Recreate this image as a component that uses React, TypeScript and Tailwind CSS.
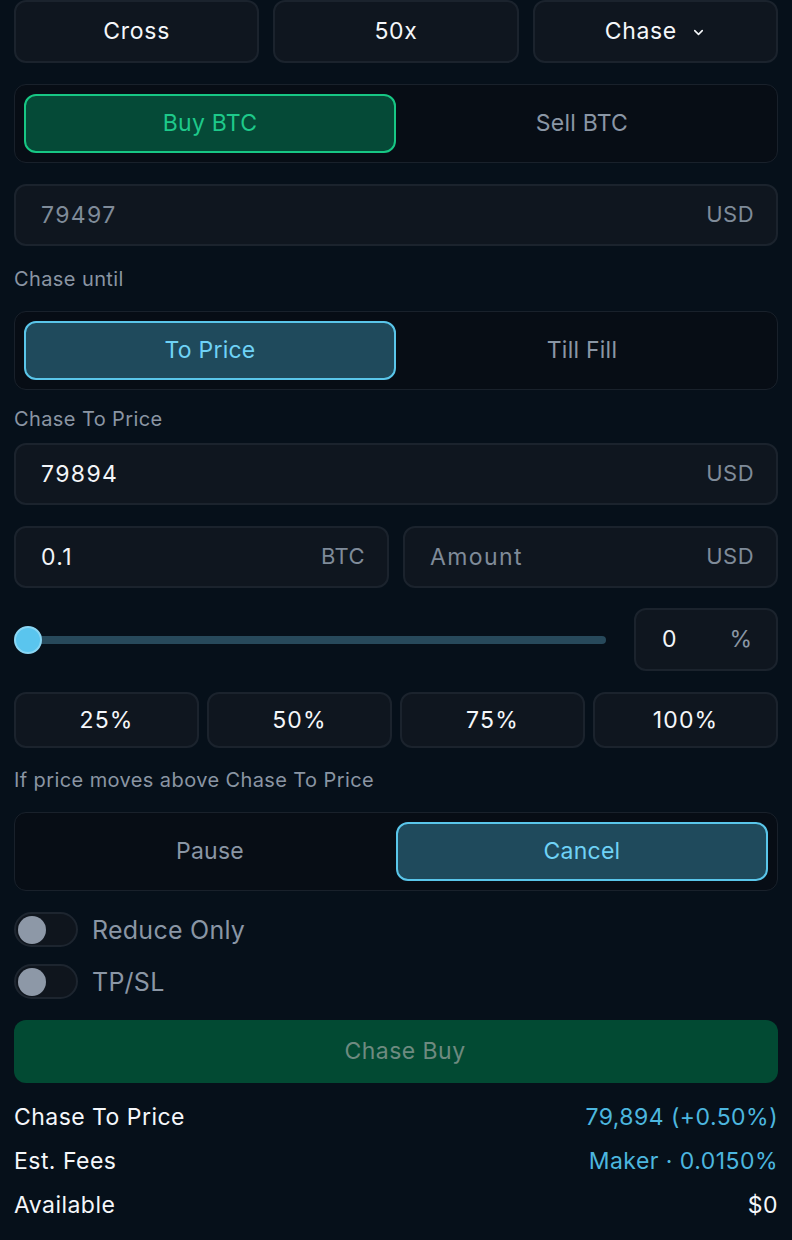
import React from "react";
import { ChevronDown } from "lucide-react";

const font = { fontFamily: "Inter, 'Noto Sans', sans-serif" };

function Seg({ left, right, active, tone }: { left: string; right: string; active: 0 | 1; tone: "green" | "cyan" }) {
  const on =
    tone === "green"
      ? "bg-[#054a37] border-[#17c784] text-[#1ec98a]"
      : "bg-[#1f4a5c] border-[#5ac6ea] text-[#6fd2f6]";
  const off = "border-transparent text-[#8a96a5]";
  return (
    <div className="h-[79px] rounded-[12px] border border-[#19212b] bg-[#070d15] p-[9px] flex">
      <div className={`flex-1 rounded-[12px] border-2 flex items-center justify-center text-[23px] tracking-[0.01em] ${active === 0 ? on : off}`}>{left}</div>
      <div className={`flex-1 rounded-[12px] border-2 flex items-center justify-center text-[23px] tracking-[0.01em] ${active === 1 ? on : off}`}>{right}</div>
    </div>
  );
}

function Input({ value, unit, placeholder, className = "" }: { value: string; unit: string; placeholder?: boolean; className?: string }) {
  return (
    <div className={`h-[62px] rounded-[12px] border-2 border-[#1b232d] bg-[#0f161f] flex items-center justify-between pl-[25px] pr-[22px] ${className}`}>
      <span className={`text-[23px] tracking-[0.06em] ${placeholder ? "text-[#7f8b99]" : "text-[#f3f5f8]"}`}>{value}</span>
      <span className="text-[22px] tracking-[0.02em] text-[#7f8b99] -mt-[2px]">{unit}</span>
    </div>
  );
}

function Toggle({ label }: { label: string }) {
  return (
    <div className="flex items-center h-[35px]">
      <div className="w-[64px] h-[35px] rounded-full border-2 border-[#1d252f] bg-[#0f151d] flex items-center pl-[2px]">
        <div className="w-[28px] h-[28px] rounded-full bg-[#8d98a7]" />
      </div>
      <span className="ml-[14px] mt-[2px] text-[25px] tracking-[0.01em] text-[#8a96a5]">{label}</span>
    </div>
  );
}

export default function App() {
  return (
    <div style={font} className="w-[792px] h-[1240px] bg-[#06101a] px-[14px] flex flex-col overflow-hidden">
      <div className="flex gap-[14px] h-[63px]">
        {["Cross", "50x"].map((t) => (
          <div key={t} className="flex-1 rounded-[12px] border-2 border-[#1b232d] bg-[#0f161f] flex items-center justify-center text-[23px] tracking-[0.03em] text-[#f5f7fa]">{t}</div>
        ))}
        <div className="flex-1 rounded-[12px] border-2 border-[#1b232d] bg-[#0f161f] flex items-center justify-center text-[23px] tracking-[0.03em] text-[#f5f7fa]">
          <span>Chase</span>
          <ChevronDown size={15} strokeWidth={2.5} className="ml-[14px] mt-[1px]" />
        </div>
      </div>

      <div className="mt-[21px]">
        <Seg left="Buy BTC" right="Sell BTC" active={0} tone="green" />
      </div>

      <Input value="79497" unit="USD" placeholder className="mt-[21px]" />

      <div className="mt-[21px] h-[24px] leading-[24px] text-[20px] tracking-[0.02em] text-[#8a95a3]">Chase until</div>

      <div className="mt-[20px]">
        <Seg left="To Price" right="Till Fill" active={0} tone="cyan" />
      </div>

      <div className="mt-[17px] h-[24px] leading-[24px] text-[20px] tracking-[0.02em] text-[#8a95a3]">Chase To Price</div>

      <Input value="79894" unit="USD" className="mt-[12px]" />

      <div className="mt-[21px] flex gap-[14px]">
        <Input value="0.1" unit="BTC" className="flex-1" />
        <Input value="Amount" unit="USD" placeholder className="flex-1" />
      </div>

      <div className="mt-[20px] flex items-center h-[63px] gap-[28px]">
        <div className="flex-1 relative h-[28px] flex items-center">
          <div className="w-full h-[8px] rounded-full bg-[#27495b]" />
          <div className="absolute left-0 top-0 w-[28px] h-[28px] rounded-full bg-[#5ac5ee] border-2 border-[#8ad6f3]" />
        </div>
        <div className="w-[144px] h-[63px] rounded-[12px] border-2 border-[#1b232d] bg-[#0f161f] flex items-center justify-between pl-[26px] pr-[24px]">
          <span className="text-[23px] text-[#f3f5f8]">0</span>
          <span className="text-[23px] text-[#8a96a5]">%</span>
        </div>
      </div>

      <div className="mt-[21px] flex gap-[8px]">
        {["25%", "50%", "75%", "100%"].map((t) => (
          <div key={t} className="flex-1 h-[56px] rounded-[12px] border-2 border-[#1b232d] bg-[#0f161f] flex items-center justify-center text-[23px] tracking-[0.05em] text-[#f5f7fa]">{t}</div>
        ))}
      </div>

      <div className="mt-[20px] h-[24px] leading-[24px] text-[20px] tracking-[0.02em] text-[#8a95a3]">If price moves above Chase To Price</div>

      <div className="mt-[20px]">
        <Seg left="Pause" right="Cancel" active={1} tone="cyan" />
      </div>

      <div className="mt-[21px]">
        <Toggle label="Reduce Only" />
      </div>
      <div className="mt-[17px]">
        <Toggle label="TP/SL" />
      </div>

      <div className="mt-[21px] h-[63px] rounded-[12px] bg-[#024a33] flex items-center justify-center pl-[18px] text-[23px] tracking-[0.02em] text-[#6e8a80]">Chase Buy</div>

      <div className="mt-[12px] flex flex-col text-[23px] tracking-[0.02em]">
        <div className="h-[44px] flex items-center justify-between">
          <span className="text-[#f5f7fa]">Chase To Price</span>
          <span className="text-[#4cb6df]">79,894 (+0.50%)</span>
        </div>
        <div className="h-[44px] flex items-center justify-between">
          <span className="text-[#f5f7fa]">Est. Fees</span>
          <span className="text-[#4cb6df]">Maker · 0.0150%</span>
        </div>
        <div className="h-[44px] flex items-center justify-between">
          <span className="text-[#f5f7fa]">Available</span>
          <span className="text-[#f5f7fa]">$0</span>
        </div>
      </div>
    </div>
  );
}
